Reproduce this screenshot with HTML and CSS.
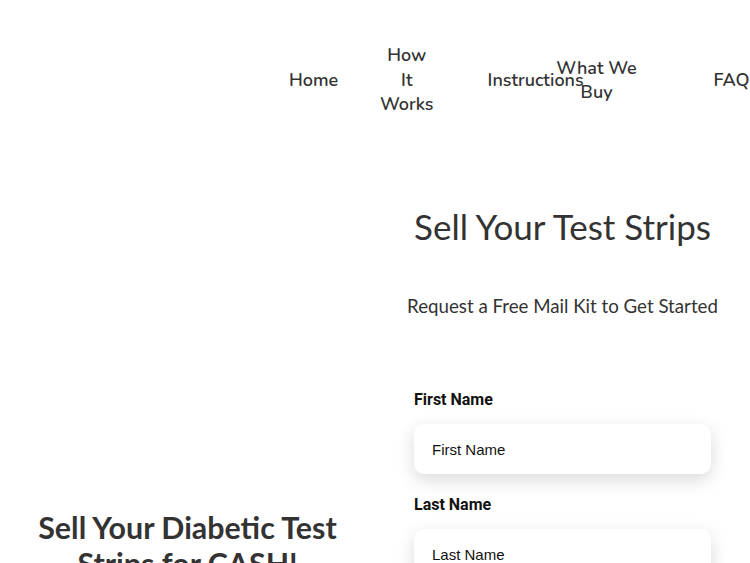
FILE: index.html
```html
<!DOCTYPE html>
<html lang="en">
<head>
<meta charset="utf-8">
<title>Sell Your Test Strips</title>
<link rel="stylesheet" href="styles.css">
</head>
<body>
<header class="site-header">
  <nav class="nav">
    <a class="nav-item nav-home" href="#">Home</a>
    <a class="nav-item nav-how" href="#">How It Works</a>
    <a class="nav-item nav-instr" href="#">Instructions</a>
    <a class="nav-item nav-what" href="#">What We Buy</a>
    <a class="nav-item nav-faq" href="#">FAQ</a>
  </nav>
</header>
<main class="hero">
  <section class="hero-left">
    <h1 class="hero-title">Sell Your Diabetic Test Strips for CASH!</h1>
  </section>
  <section class="hero-right">
    <h2 class="form-title">Sell Your Test Strips</h2>
    <p class="form-sub">Request a Free Mail Kit to Get Started</p>
    <form class="form">
      <label class="field-label" for="fn">First Name</label>
      <input class="field-input" id="fn" type="text" placeholder="First Name">
      <label class="field-label" for="ln">Last Name</label>
      <input class="field-input" id="ln" type="text" placeholder="Last Name">
    </form>
  </section>
</main>
</body>
</html>
```
FILE: styles.css
```css
html, body {
  margin: 0;
  padding: 0;
  background: #fff;
  overflow: hidden;
}
body {
  width: 750px;
  height: 563px;
  font-family: "Lato", "Liberation Sans", sans-serif;
  color: #333;
}
.site-header {
  height: 160px;
  display: flex;
  align-items: center;
}
.nav {
  display: flex;
  align-items: center;
  padding-left: 289px;
  font-family: "Nunito", "Open Sans", sans-serif;
  font-weight: 600;
  font-size: 18px;
  line-height: 24.5px;
}
.nav-item {
  color: #333;
  text-decoration: none;
  text-align: center;
  flex: none;
}
.nav-home { width: 49px; text-align: left; }
.nav-how { width: min-content; margin-left: 42px; }
.nav-instr { width: 64px; margin-left: 54px; text-align: left; }
.nav-what { width: 90px; }
.nav-faq { width: 40px; margin-left: 72px; text-align: left; }

.hero {
  display: grid;
  grid-template-columns: 375px 375px;
}
.hero-left {
  padding: 349px 32px 0;
  text-align: center;
}
.hero-title {
  margin: 0;
  font-family: "Lato", sans-serif;
  font-weight: 700;
  font-size: 30.4px;
  line-height: 36px;
  color: #333;
}
.hero-right {
  padding: 44px 39px 0;
  text-align: center;
}
.form-title {
  margin: 0;
  font-family: "Lato", sans-serif;
  font-weight: 400;
  font-size: 35px;
  line-height: 44px;
  color: #333;
}
.form-sub {
  margin: 46px -20px 0;
  font-size: 18.7px;
  line-height: 24px;
  white-space: nowrap;
  color: #333;
}
.form {
  margin-top: 72px;
  display: flex;
  flex-direction: column;
  text-align: left;
}
.field-label {
  font-family: "Roboto", sans-serif;
  font-weight: 700;
  font-size: 16px;
  line-height: 20px;
  color: #111;
}
.field-input {
  margin: 14px 0 21px;
  height: 50px;
  box-sizing: border-box;
  border: none;
  border-radius: 10px;
  padding: 0 18px;
  font-family: "Liberation Sans", Arial, sans-serif;
  font-size: 15px;
  color: #111;
  background: #fff;
  box-shadow: 0 6px 18px rgba(0, 0, 0, 0.15);
  outline: none;
}
.field-input::placeholder {
  color: #111;
  opacity: 1;
}
```
